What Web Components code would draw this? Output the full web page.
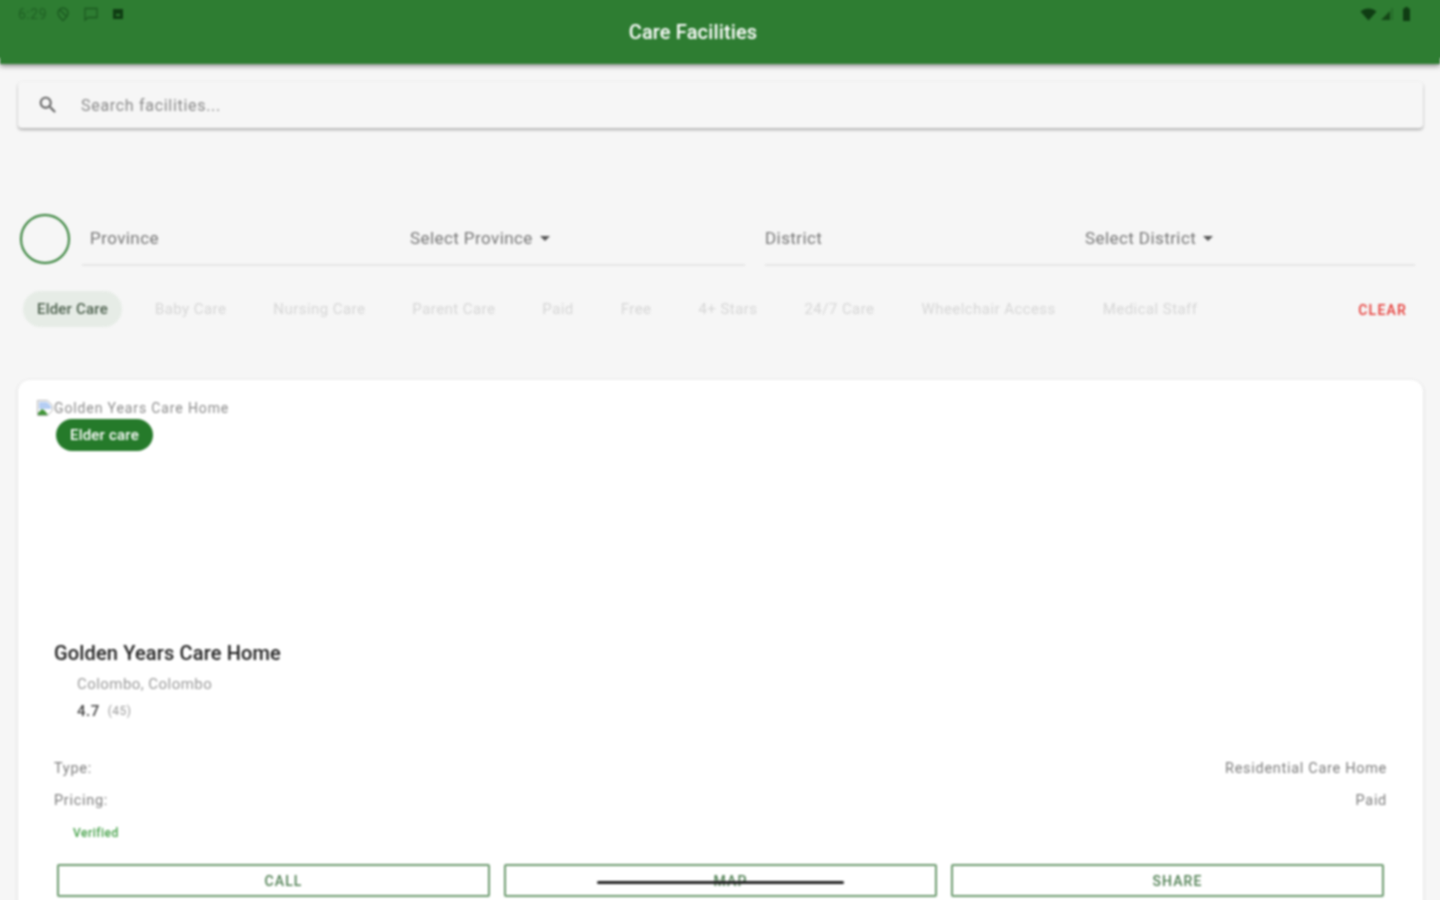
<!DOCTYPE html>
<html>
<head>
<meta charset="utf-8">
<title>Care Facilities</title>
<style>
    html, body { margin: 0; height: 900px; overflow: hidden; background: #f6f6f6; }
    body { font-family: Roboto, "Liberation Sans", sans-serif; }
    #page { display: block; height: 900px; filter: blur(0.8px); }
</style>
</head>
<body>
<div id="page">
    <app-bar title="Care Facilities"></app-bar>
    <search-box placeholder="Search facilities..."></search-box>
    <filter-row>
        <select-field label="Province" value="Select Province" indent="8" width="663"></select-field>
        <select-field label="District" value="Select District" indent="0" width="650"></select-field>
    </filter-row>
    <chip-row>
        <filter-chip selected>Elder Care</filter-chip>
        <filter-chip>Baby Care</filter-chip>
        <filter-chip>Nursing Care</filter-chip>
        <filter-chip>Parent Care</filter-chip>
        <filter-chip>Paid</filter-chip>
        <filter-chip>Free</filter-chip>
        <filter-chip>4+ Stars</filter-chip>
        <filter-chip>24/7 Care</filter-chip>
        <filter-chip>Wheelchair Access</filter-chip>
        <filter-chip>Medical Staff</filter-chip>
    </chip-row>
    <facility-card name="Golden Years Care Home" badge="Elder care" place="Colombo, Colombo" rating="4.7" reviews="(45)">
        <info-row label="Type:">Residential Care Home</info-row>
        <info-row label="Pricing:">Paid</info-row>
    </facility-card>
</div>

<script>
class AppBar extends HTMLElement {
    constructor() {
        super();
        this.attachShadow({ mode: 'open' });
    }
    connectedCallback() {
        this.shadowRoot.innerHTML = `
            <style>
                :host {
                    display: block;
                    height: 64px;
                    background: #2e7d32;
                    /* the two green copies keep the blur from washing out the window edges */
                    box-shadow: -6px -6px 0 #2e7d32, 6px -6px 0 #2e7d32, 0 2px 5px rgba(0,0,0,0.45);
                    position: relative;
                    z-index: 2;
                }
                .status {
                    display: flex;
                    align-items: center;
                    height: 16px;
                    padding: 6px 29px 0 18px;
                    color: #17501c;
                    font-size: 14px;
                    letter-spacing: .5px;
                }
                .status svg { display: block; }
                .left { display: flex; align-items: center; gap: 7px; }
                .right { display: flex; align-items: center; gap: 3px; margin-left: auto; }
                .time { opacity: .65; width: 30px; }
                h1 {
                    margin: 0;
                    padding-right: 54px;
                    text-align: center;
                    color: #fff;
                    font-size: 20px;
                    line-height: 20px;
                    font-weight: 500;
                    letter-spacing: .15px;
                }
            </style>
            <div class="status">
                <div class="left">
                    <span class="time">6:29</span>
                    <svg width="16" height="16" viewBox="0 0 16 16" fill="none" stroke="#17501c" stroke-width="1.4" opacity=".8"><path d="M8 2a5 5 0 0 1 5 5c0 3-5 7.500-5 7.500S3 10 3 7a5 5 0 0 1 5-5z"/><path d="M4.500 3.500l7 7"/></svg>
                    <svg style="margin-left:5px" width="16" height="16" viewBox="0 0 16 16" fill="none" stroke="#17501c" stroke-width="1.3" opacity=".8"><path d="M2 2.500h12v9H5l-3 2.500z"/></svg>
                    <svg style="margin-left:6px" width="12" height="12" viewBox="0 0 12 12"><path fill="#0f3d13" d="M1 1h10v10H1z"/><path fill="#2e7d32" d="M4 6h4v2H4z"/></svg>
                </div>
                <div class="right">
                    <svg style="margin-right:1px" width="17" height="13" viewBox="0 0 17 13"><path fill="#0f3d13" d="M0.500 3.500C5 -0.500 12 -0.500 16.500 3.500L8.500 12.500z"/></svg>
                    <svg width="13" height="14" viewBox="0 0 13 14"><path fill="#0f3d13" opacity=".85" d="M0 13L9 4v9z"/><path fill="none" stroke="#0f3d13" opacity=".5" d="M11 1v12"/></svg>
                    <svg style="margin-left:5px" width="9" height="14" viewBox="0 0 9 14"><path fill="#0f3d13" d="M3 0h3v1.500h2V14H1V1.500h2z"/></svg>
                </div>
            </div>
            <h1>${this.getAttribute('title')}</h1>
        `;
    }
}

class SearchBox extends HTMLElement {
    constructor() {
        super();
        this.attachShadow({ mode: 'open' });
    }
    connectedCallback() {
        this.shadowRoot.innerHTML = `
            <style>
                :host {
                    display: flex;
                    align-items: center;
                    gap: 22px;
                    height: 46px;
                    margin: 18px 17px 0 18px;
                    padding-left: 19px;
                    background: #f6f6f6;
                    border-radius: 4px;
                    box-shadow: 0 2px 3px rgba(0,0,0,0.28), 0 0 2px rgba(0,0,0,0.08);
                }
                svg { display: block; }
                span { color: #8a8a8a; font-size: 16px; letter-spacing: .7px; }
            </style>
            <svg width="22" height="22" viewBox="0 0 24 24"><path fill="#555" d="M15.500 14h-.79l-.28-.27A6.470 6.470 0 0 0 16 9.500 6.500 6.500 0 1 0 9.500 16c1.610 0 3.090-.59 4.230-1.570l.27.28v.79l5 4.990L20.490 19l-4.990-5zm-6 0C7.010 14 5 11.990 5 9.500S7.010 5 9.500 5 14 7.010 14 9.500 11.990 14 9.500 14z"/></svg>
            <span>${this.getAttribute('placeholder')}</span>
        `;
    }
}

class FilterRow extends HTMLElement {
    constructor() {
        super();
        this.attachShadow({ mode: 'open' });
    }
    connectedCallback() {
        this.shadowRoot.innerHTML = `
            <style>
                :host {
                    display: flex;
                    margin: 86px 0 0 20px;
                    height: 52px;
                }
                .ring {
                    width: 46px;
                    height: 46px;
                    border: 2px solid #2e7d32;
                    border-radius: 50%;
                    margin-right: 12px;
                    flex: none;
                }
                .fields { display: flex; gap: 20px; }
            </style>
            <div class="ring"></div>
            <div class="fields"><slot></slot></div>
        `;
    }
}

class SelectField extends HTMLElement {
    constructor() {
        super();
        this.attachShadow({ mode: 'open' });
    }
    connectedCallback() {
        const indent = this.getAttribute('indent');
        this.shadowRoot.innerHTML = `
            <style>
                :host {
                    display: flex;
                    align-items: center;
                    box-sizing: border-box;
                    width: ${this.getAttribute('width')}px;
                    height: 52px;
                    padding: 0 0 2px ${indent}px;
                    border-bottom: 2px solid #e6e6e6;
                    font-size: 17px;
                    letter-spacing: .42px;
                    color: #777;
                }
                .label { width: 320px; flex: none; }
                .arrow {
                    width: 0;
                    height: 0;
                    margin-left: 7px;
                    border: 5px solid transparent;
                    border-top-color: #555;
                    border-bottom: 0;
                }
            </style>
            <span class="label">${this.getAttribute('label')}</span>
            <span>${this.getAttribute('value')}</span>
            <span class="arrow"></span>
        `;
    }
}

class ChipRow extends HTMLElement {
    constructor() {
        super();
        this.attachShadow({ mode: 'open' });
    }
    connectedCallback() {
        this.shadowRoot.innerHTML = `
            <style>
                :host {
                    display: flex;
                    align-items: center;
                    gap: 19px;
                    height: 36px;
                    margin: 25px 33px 0 23px;
                }
                .clear {
                    margin-left: auto;
                    padding-top: 1px;
                    color: #e53935;
                    font-size: 14px;
                    font-weight: 500;
                    letter-spacing: 1.200px;
                }
            </style>
            <slot></slot>
            <span class="clear">CLEAR</span>
        `;
    }
}

class FilterChip extends HTMLElement {
    constructor() {
        super();
        this.attachShadow({ mode: 'open' });
    }
    connectedCallback() {
        this.shadowRoot.innerHTML = `
            <style>
                :host {
                    display: flex;
                    align-items: center;
                    height: 36px;
                    padding: 0 14px;
                    border-radius: 18px;
                    font-size: 15px;
                    letter-spacing: .44px;
                    color: #d6d6d6;
                }
                :host([selected]) {
                    background: #e6ece6;
                    color: #4b5f4c;
                    font-weight: 500;
                    letter-spacing: .2px;
                }
            </style>
            <slot></slot>
        `;
    }
}

class FacilityCard extends HTMLElement {
    constructor() {
        super();
        this.attachShadow({ mode: 'open' });
    }
    connectedCallback() {
        const name = this.getAttribute('name');
        this.shadowRoot.innerHTML = `
            <style>
                :host {
                    display: block;
                    height: 560px;
                    margin: 53px 17px 0 18px;
                    background: #fff;
                    border-radius: 12px;
                    box-shadow: 0 1px 4px rgba(0,0,0,0.12);
                }
                .photo {
                    height: 252px;
                    padding: 19px 0 0 19px;
                    box-sizing: border-box;
                }
                .alt {
                    display: flex;
                    align-items: center;
                    height: 18px;
                    font-size: 14px;
                    letter-spacing: .88px;
                    color: #8b8b8b;
                }
                .alt svg { flex: none; display: block; margin-right: 1px; }
                .badge {
                    display: inline-flex;
                    align-items: center;
                    height: 32px;
                    margin: 2px 0 0 19px;
                    padding: 0 14px;
                    border-radius: 16px;
                    background: #257a2a;
                    color: #fff;
                    font-size: 15px;
                    font-weight: 500;
                    letter-spacing: .2px;
                }
                .body { padding: 9px 36px 0; }
                h2 {
                    margin: 0;
                    font-size: 20px;
                    line-height: 24px;
                    font-weight: 500;
                    letter-spacing: .15px;
                    color: #222;
                }
                .sub { padding-left: 23px; }
                .place {
                    margin-top: 9px;
                    font-size: 15px;
                    line-height: 20px;
                    letter-spacing: .45px;
                    color: #9a9a9a;
                }
                .rating {
                    display: flex;
                    align-items: center;
                    gap: 8px;
                    margin-top: 7px;
                    height: 20px;
                    font-size: 15px;
                    font-weight: 500;
                    letter-spacing: .5px;
                    color: #444;
                }
                .rating small { font-size: 12px; font-weight: 400; letter-spacing: .5px; color: #999; }
                .rows { margin-top: 38px; display: grid; gap: 13px; }
                .verified {
                    margin: 15px 0 0 19px;
                    height: 16px;
                    line-height: 16px;
                    font-size: 12px;
                    font-weight: 500;
                    letter-spacing: .5px;
                    color: #43a047;
                }
                .actions {
                    display: grid;
                    grid-template-columns: repeat(3, 1fr);
                    gap: 14px;
                    margin: 23px 3px 0;
                    position: relative;
                }
                button {
                    height: 33px;
                    padding: 0 0 0 20px;
                    background: #fff;
                    border: 2px solid #6b9a6e;
                    border-radius: 2px;
                    font: 500 14px Roboto, "Liberation Sans", sans-serif;
                    letter-spacing: 1.100px;
                    color: #4f7f52;
                }
                .home-bar {
                    position: absolute;
                    left: 540px;
                    top: 17px;
                    width: 247px;
                    height: 3px;
                    border-radius: 2px;
                    background: #222;
                }
            </style>
            <div class="photo">
                <div class="alt">
                    <svg width="16" height="16" viewBox="0 0 16 16">
                        <path fill="#fff" stroke="#b5b5b5" d="M.500 .500h10l5 5v5l-5 5H.500z"/>
                        <path fill="#b4cdf3" d="M2 2h8l4 4v3H2z"/>
                        <path fill="#3f9436" d="M1 15v-2l4-4 3 2 3 4z"/>
                    </svg>
                    <span>${name}</span>
                </div>
                <span class="badge">${this.getAttribute('badge')}</span>
            </div>
            <div class="body">
                <h2>${name}</h2>
                <div class="sub">
                    <div class="place">${this.getAttribute('place')}</div>
                    <div class="rating">${this.getAttribute('rating')} <small>${this.getAttribute('reviews')}</small></div>
                </div>
                <div class="rows"><slot></slot></div>
                <div class="verified">Verified</div>
                <div class="actions">
                    <button>CALL</button>
                    <button>MAP</button>
                    <button>SHARE</button>
                    <div class="home-bar"></div>
                </div>
            </div>
        `;
    }
}

class InfoRow extends HTMLElement {
    constructor() {
        super();
        this.attachShadow({ mode: 'open' });
    }
    connectedCallback() {
        this.shadowRoot.innerHTML = `
            <style>
                :host {
                    display: flex;
                    justify-content: space-between;
                    height: 19px;
                    line-height: 19px;
                    font-size: 14.500px;
                    letter-spacing: .7px;
                    color: #7d7d7d;
                }
            </style>
            <span>${this.getAttribute('label')}</span>
            <span><slot></slot></span>
        `;
    }
}

customElements.define('app-bar', AppBar);
customElements.define('search-box', SearchBox);
customElements.define('filter-row', FilterRow);
customElements.define('select-field', SelectField);
customElements.define('chip-row', ChipRow);
customElements.define('filter-chip', FilterChip);
customElements.define('facility-card', FacilityCard);
customElements.define('info-row', InfoRow);
</script>
</body>
</html>
